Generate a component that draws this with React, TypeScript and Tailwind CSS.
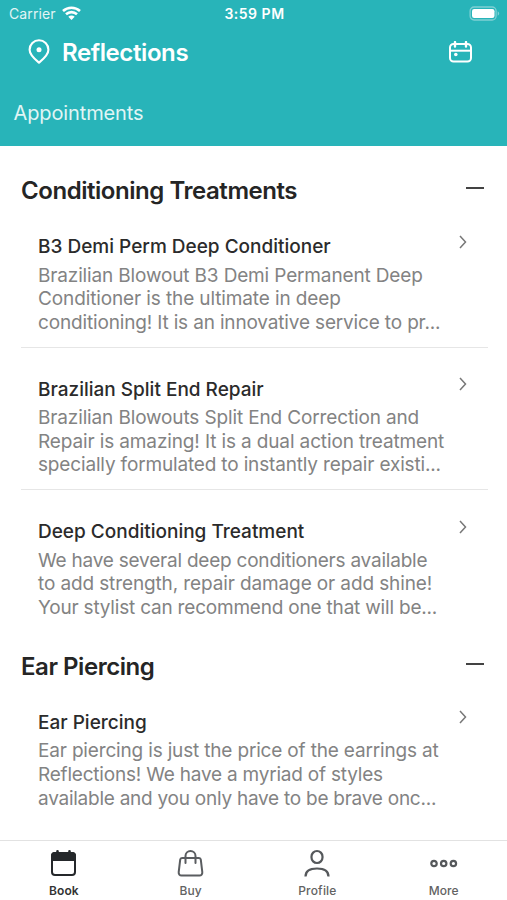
type Line = { text: string; tracking: string };
type Item = { title: string; lines: Line[] };

const conditioning: Item[] = [
  {
    title: 'B3 Demi Perm Deep Conditioner',
    lines: [
      { text: 'Brazilian Blowout B3 Demi Permanent Deep', tracking: 'tracking-[-0.15px]' },
      { text: 'Conditioner is the ultimate in deep', tracking: 'tracking-[-0.12px]' },
      { text: 'conditioning! It is an innovative service to pr...', tracking: 'tracking-[-0.16px]' },
    ],
  },
  {
    title: 'Brazilian Split End Repair',
    lines: [
      { text: 'Brazilian Blowouts Split End Correction and', tracking: 'tracking-[-0.14px]' },
      { text: 'Repair is amazing! It is a dual action treatment', tracking: 'tracking-[-0.13px]' },
      { text: 'specially formulated to instantly repair existi...', tracking: 'tracking-[-0.16px]' },
    ],
  },
  {
    title: 'Deep Conditioning Treatment',
    lines: [
      { text: 'We have several deep conditioners available', tracking: 'tracking-[-0.22px]' },
      { text: 'to add strength, repair damage or add shine!', tracking: 'tracking-[-0.12px]' },
      { text: 'Your stylist can recommend one that will be...', tracking: 'tracking-[-0.2px]' },
    ],
  },
];

const piercing: Item[] = [
  {
    title: 'Ear Piercing',
    lines: [
      { text: 'Ear piercing is just the price of the earrings at', tracking: 'tracking-[-0.17px]' },
      { text: 'Reflections! We have a myriad of styles', tracking: 'tracking-[-0.21px]' },
      { text: 'available and you only have to be brave onc...', tracking: 'tracking-[-0.25px]' },
    ],
  },
];

function StatusBar() {
  return (
    <div className="grid h-7 grid-cols-3 items-center pl-[9px] pr-[7px] text-[14px] leading-7">
      <div className="flex items-center gap-[6px]">
        <span className="tracking-[0.1px] text-[#e2f5f5]">Carrier</span>
        <svg className="-mt-[2px]" width="19" height="14" viewBox="0 0 19 14" fill="none" stroke="#fff" strokeWidth="2.6">
          <path d="M1 5C5.8.6 13.2.6 18 5" />
          <path d="M4 8.300c3.200-2.900 7.800-2.900 11 0" />
          <path d="M6.300 10.700 9.500 14l3.200-3.300C10.900 9.100 8.100 9.100 6.300 10.700Z" fill="#fff" stroke="none" />
        </svg>
      </div>
      <span className="text-center font-semibold tracking-[0.5px] whitespace-nowrap">3:59 PM</span>
      <svg className="-mt-px justify-self-end" width="31" height="15" viewBox="0 0 31 15">
        <rect x="1.100" y="1" width="26" height="13" rx="4" fill="none" stroke="#7fd0d4" strokeWidth="1.300" />
        <rect x="3" y="3" width="22.500" height="9" rx="2.200" fill="#fff" />
        <path d="M28.700 5.300c2 .8 2 3.600 0 4.400Z" fill="#7fd0d4" />
      </svg>
    </div>
  );
}

function Header() {
  return (
    <header className="h-[146px] bg-[#28b4b9] text-white">
      <StatusBar />
      <div className="flex h-12 items-center pl-[28px] pr-[34px]">
        <svg width="22" height="26" viewBox="0 0 22 26" fill="none" stroke="#fff" strokeWidth="2.100">
          <path d="M11 23.600C8.200 21.200 1.600 16.300 1.600 10.700a9.400 9.400 0 0 1 18.800 0c0 5.600-6.600 10.500-9.400 12.900Z" strokeLinejoin="round" />
          <circle cx="11" cy="10.700" r="2.500" fill="#fff" stroke="none" />
        </svg>
        <h1 className="ml-[12px] pt-px text-[24px] font-semibold tracking-[-0.4px]">Reflections</h1>
        <svg className="ml-auto" width="25" height="22" viewBox="0 0 25 22" fill="none" stroke="#fff" strokeWidth="2">
          <rect x="2" y="3" width="21" height="17.500" rx="3.500" />
          <path d="M2 9.700h21" />
          <path d="M7 1v4.500M18 1v4.500" strokeWidth="2.400" strokeLinecap="round" />
          <circle cx="7.800" cy="13.500" r="1.800" fill="#fff" stroke="none" />
        </svg>
      </div>
      <p className="pl-[13.500px] pt-[21px] text-[20px] leading-8 tracking-[-0.12px] text-[#e0f5f5]">Appointments</p>
    </header>
  );
}

function ItemRow({ item, divider }: { item: Item; divider: boolean }) {
  return (
    <li className={'flex h-[142.600px] border-b pt-[29px] ' + (divider ? 'border-[#e6e6e6]' : 'border-transparent')}>
      <div className="w-[421px] shrink-0 whitespace-nowrap pl-[17px] pt-px">
        <h3 className="text-[19px] font-medium leading-[24px] text-[#2b2b2b]">{item.title}</h3>
        <p className="mt-[4.600px] text-[19px] leading-[23.600px] text-[#838383]">
          {item.lines.map((l) => (
            <span key={l.text} className={'block w-max ' + l.tracking}>{l.text}</span>
          ))}
        </p>
      </div>
      <svg className="ml-[17px] mt-[0.500px]" width="8" height="14" viewBox="0 0 8 14" fill="none" stroke="#777" strokeWidth="1.500">
        <path d="M1 1l5.500 6L1 13" />
      </svg>
    </li>
  );
}

function Section({ title, items }: { title: string; items: Item[] }) {
  return (
    <section>
      <div className="flex h-12 items-center justify-between pr-1 pt-5">
        <h2 className="text-[24px] font-semibold leading-[30px] tracking-[-0.45px] text-[#252525]">{title}</h2>
        <span className="mb-[6px] h-[2px] w-[18px] bg-[#434343]" />
      </div>
      <ul>
        {items.map((it, i) => (
          <ItemRow key={it.title} item={it} divider={i < items.length - 1} />
        ))}
      </ul>
    </section>
  );
}

function TabBar() {
  return (
    <nav className="grid h-[60px] grid-cols-4 border-t border-[#e2e2e2] text-center text-[12px] font-medium leading-4 text-[#626262]">
      <div className="flex flex-col items-center pt-[8px] text-[#333]">
        <svg width="28" height="28" viewBox="0 0 28 28" fill="none" stroke="#25282b" strokeWidth="2">
          <rect x="3" y="4" width="23" height="22" rx="3" />
          <path d="M3 11V7a3 3 0 0 1 3-3h17a3 3 0 0 1 3 3v4Z" fill="#25282b" />
          <path d="M8.500 2.200v3M20.500 2.200v3" strokeWidth="2.600" strokeLinecap="round" />
        </svg>
        <span className="mt-[6px] pl-px font-semibold tracking-[0.1px]">Book</span>
      </div>
      <div className="flex flex-col items-center pt-[8px]">
        <svg width="28" height="28" viewBox="0 0 28 28" fill="none" stroke="#5a5d60" strokeWidth="2" strokeLinecap="round">
          <path d="M6 9h17c1 0 1.700.7 1.800 1.700l1.500 12.500c.2 1.800-1 3.300-2.800 3.300H5.500c-1.800 0-3-1.500-2.800-3.300l1.500-12.500C4.300 9.700 5 9 6 9Z" />
          <path d="M9.500 14V7a5 5 0 0 1 10 0v7" />
        </svg>
        <span className="mt-[6px] pl-px">Buy</span>
      </div>
      <div className="flex flex-col items-center pt-[8px]">
        <svg width="28" height="28" viewBox="0 0 28 28" fill="none" stroke="#55585b" strokeWidth="2.200">
          <rect x="8.500" y="2" width="11" height="12" rx="5.500" />
          <path d="M2.500 27.500c0-5.500 4.500-8 11.500-8s11.500 2.500 11.500 8" />
        </svg>
        <span className="mt-[6px] pl-px tracking-[0.200px]">Profile</span>
      </div>
      <div className="flex flex-col items-center pt-[8px]">
        <svg width="28" height="28" viewBox="0 0 28 28" fill="none" stroke="#55585b" strokeWidth="2.200">
          <circle cx="4" cy="14.500" r="2.700" />
          <circle cx="13.700" cy="14.500" r="2.700" />
          <circle cx="23.400" cy="14.500" r="2.700" />
        </svg>
        <span className="mt-[6px]">More</span>
      </div>
    </nav>
  );
}

export default function App() {
  return (
    <div className="flex h-[900px] w-[507px] flex-col overflow-hidden bg-white font-['Inter','Liberation_Sans',sans-serif]">
      <Header />
      <main className="min-h-0 flex-1 overflow-hidden pl-[21px] pr-[19px] pt-[11px]">
        <Section title="Conditioning Treatments" items={conditioning} />
        <Section title="Ear Piercing" items={piercing} />
      </main>
      <TabBar />
    </div>
  );
}
